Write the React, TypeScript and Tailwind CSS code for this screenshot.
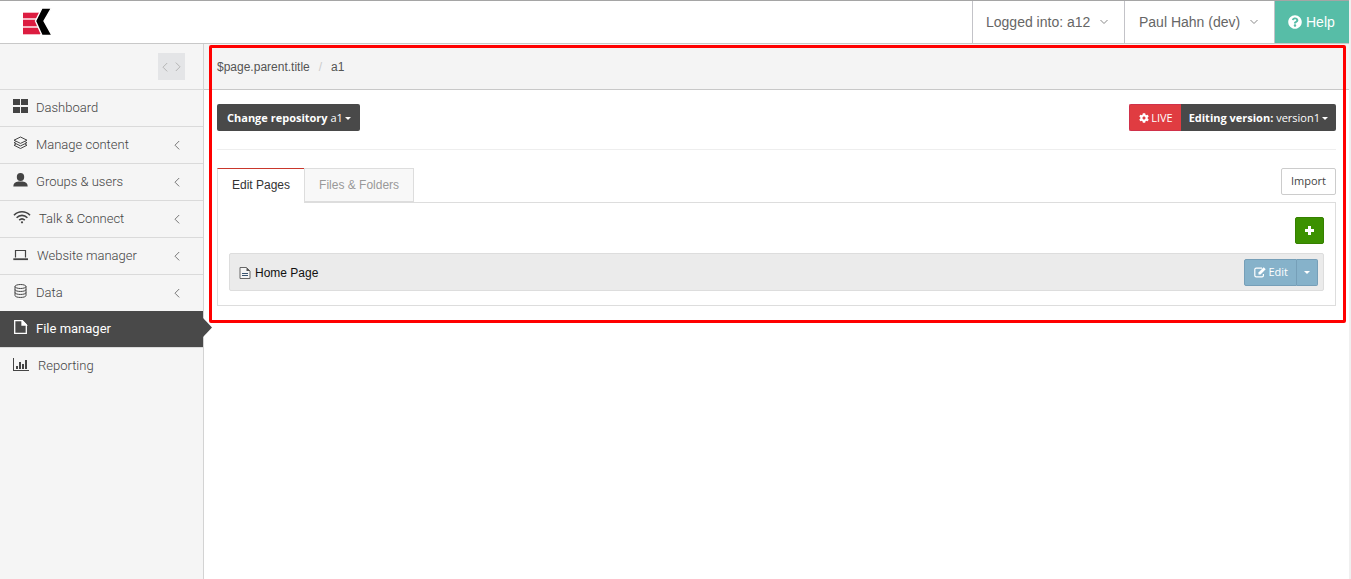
import type { ReactNode } from "react";
import { FaCog, FaQuestionCircle } from "react-icons/fa";

interface NavItem {
  label: string;
  icon: ReactNode;
  expandable?: boolean;
  active?: boolean;
  divider?: boolean;
}

const navItems: NavItem[] = [
  {
    label: "Dashboard",
    divider: true,
    icon: (
      <svg width="15" height="14" viewBox="0 0 15 14" fill="currentColor">
        <path d="M0 0h7v6H0zM8 0h7v6H8zM0 8h7v6H0zM8 8h7v6H8z" />
      </svg>
    ),
  },
  {
    label: "Manage content",
    expandable: true,
    divider: true,
    icon: (
      <svg width="15" height="14" viewBox="0 0 15 14" fill="none" stroke="currentColor" strokeLinejoin="round">
        <path d="M7.5 1 14 4.2 7.5 7.400 1 4.200z" />
        <path d="M2.800 5.800 1 6.700l6.500 3.200L14 6.700l-1.800-.9M2.800 8.300 1 9.200l6.500 3.300L14 9.200l-1.800-.9" />
      </svg>
    ),
  },
  {
    label: "Groups & users",
    expandable: true,
    divider: true,
    icon: (
      <svg width="15" height="14" viewBox="0 0 15 14" fill="currentColor">
        <ellipse cx="7.500" cy="4" rx="3.700" ry="4" />
        <path d="M.3 13.500c0-3.200 1.700-4.500 5.200-5h4c3.500.5 5.200 1.800 5.200 5z" />
      </svg>
    ),
  },
  {
    label: "Talk & Connect",
    expandable: true,
    divider: true,
    icon: (
      <svg width="18" height="14" viewBox="0 0 18 14" fill="none" stroke="currentColor" strokeWidth="1.600">
        <path d="M1 5.200C5.500.600 12.500.600 17 5.200" />
        <path d="M3.600 7.800c3.200-3.200 7.600-3.200 10.800 0" />
        <path d="M6.200 10.200c1.700-1.600 3.900-1.600 5.600 0" />
        <circle cx="9" cy="12.300" r="1.100" fill="currentColor" stroke="none" />
      </svg>
    ),
  },
  {
    label: "Website manager",
    expandable: true,
    divider: true,
    icon: (
      <svg width="16" height="14" viewBox="0 0 16 14" fill="none" stroke="currentColor">
        <path d="M2.500 10.500v-7h10v7" strokeWidth="1.200" />
        <path d="M.3 12.200h14.700" strokeWidth="1.800" />
      </svg>
    ),
  },
  {
    label: "Data",
    expandable: true,
    icon: (
      <svg width="15" height="14" viewBox="0 0 15 14" fill="none" stroke="currentColor">
        <ellipse cx="7.500" cy="2.500" rx="5.500" ry="2" />
        <path d="M2 2.500v9c0 2.600 11 2.600 11 0v-9M2 5.500c0 2.600 11 2.600 11 0M2 8.500c0 2.600 11 2.600 11 0" />
      </svg>
    ),
  },
  {
    label: "File manager",
    active: true,
    divider: true,
    icon: (
      <svg width="15" height="14" viewBox="0 0 15 14" fill="none" stroke="currentColor" strokeWidth="1.300">
        <path d="M1.700.700h7.600l4 4v8.600H1.700z" />
        <path d="M9 .700v4.300h4.300z" fill="currentColor" />
      </svg>
    ),
  },
  {
    label: "Reporting",
    icon: (
      <svg width="17" height="14" viewBox="0 0 17 14" fill="currentColor">
        <path d="M0 1h1v12h15v1H0zM3 9h2v3H3zM6 5h2v7H6zM9 7h2v5H9zM12 3h2v9h-2z" />
      </svg>
    ),
  },
];

function Logo() {
  return (
    <svg width="30" height="28" viewBox="0 0 30 28" aria-label="EK">
      <path d="M0 4h17v23H0z" fill="#f6b9c4" />
      <path d="M0 5h17v5H0zM0 12h17v6H0zM0 20h19v6H0z" fill="#dc1c40" />
      <path d="M19 0h9.500L21 13l8 14.500H19L12.500 13z" fill="#000" stroke="#fff" strokeWidth="1.400" />
    </svg>
  );
}

function Chevron({ className }: { className: string }) {
  return (
    <svg className={className} width="8" height="12" viewBox="0 0 8 12" fill="none" stroke="currentColor">
      <path d="M6.200 2 2 6.200l4.200 4.200" />
    </svg>
  );
}

function DownChevron() {
  return (
    <svg width="8" height="6" viewBox="0 0 8 6" fill="none" stroke="#888">
      <path d="M.5 1 4 4.500 7.500 1" />
    </svg>
  );
}

function Caret() {
  return (
    <svg width="6" height="3" viewBox="0 0 6 3" fill="currentColor">
      <path d="M0 0h6L3 3z" />
    </svg>
  );
}

function EditIcon() {
  return (
    <svg width="12" height="11" viewBox="0 0 12 11" fill="none" stroke="currentColor">
      <path d="M8 1.200H2.200Q.8 1.200.8 2.600v5.800q0 1.400 1.400 1.400H8q1.400 0 1.400-1.400V7" strokeWidth="1.200" />
      <path d="M4.500 7.500V5.500L9.700.300l2 2-5.200 5.200z" fill="currentColor" stroke="none" />
    </svg>
  );
}

function Header() {
  return (
    <header className="flex h-11 items-stretch justify-between border-t border-b border-t-[#a5a5a5] border-b-[#c8c8c8] bg-white font-['Liberation_Sans',sans-serif] text-sm text-[#666]">
      <a href="#" className="flex items-center pl-[23px]">
        <Logo />
      </a>
      <div className="flex">
        <button type="button" className="flex w-[152px] items-center gap-[10px] border-l border-[#c3c3c8] pl-[13px]">
          Logged into: a12
          <DownChevron />
        </button>
        <button type="button" className="flex w-[150px] items-center gap-[10px] border-l border-[#c3c3c8] pl-[14px]">
          Paul Hahn (dev)
          <DownChevron />
        </button>
        <a href="#" className="flex w-[75px] items-center gap-1 border-l border-[#c3c3c8] bg-[#57bda7] pl-[13px] text-white">
          <FaQuestionCircle className="mb-px size-[14px]" />
          Help
        </a>
      </div>
    </header>
  );
}

function Sidebar() {
  return (
    <aside className="w-[204px] shrink-0 border-r border-[#d3d3d3] bg-[#f5f5f5] font-[Roboto,sans-serif]">
      <div className="flex h-[46px] items-center justify-end border-b border-[#dadada] pr-[18px]">
        <button type="button" aria-label="Toggle sidebar" className="flex size-[27px] items-center justify-center gap-[5px] bg-[#e4e5e7] text-[#b5b5b5]">
          <Chevron className="" />
          <Chevron className="rotate-180" />
        </button>
      </div>
      <nav>
        {navItems.map((item) => (
          <a
            key={item.label}
            href="#"
            className={`relative flex items-center gap-2 pl-[13px] text-[13px] ${
              item.divider ? "h-[37px] border-b border-[#dadada]" : "h-9"
            } ${item.active ? "bg-[#494949] bg-clip-padding text-white" : "font-light text-[#444]"}`}
          >
            <span className="pb-1">{item.icon}</span>
            <span>{item.label}</span>
            {item.expandable && <Chevron className="mr-[22px] ml-auto text-[#777]" />}
            {item.active && (
              <svg className="absolute top-[7px] left-full" width="9" height="19" viewBox="0 0 9 19">
                <path d="M0 0l9 9.500L0 19z" fill="#494949" />
              </svg>
            )}
          </a>
        ))}
      </nav>
    </aside>
  );
}

function Toolbar() {
  return (
    <div className="flex items-center justify-between border-b border-[#eee] pb-[18px] font-['Open_Sans',sans-serif] text-[11px] text-white">
      <button type="button" className="flex h-[27px] items-center gap-[2px] rounded-xs bg-[#494949] pt-px pr-[9px] pl-[10px]">
        <span>
          <b>Change repository</b> a1
        </span>
        <Caret />
      </button>
      <div className="flex">
        <button type="button" className="flex h-[27px] items-center gap-[2px] rounded-l-xs border border-r-0 border-[#d0314a] bg-[#e03c41] pt-px pr-2 pl-[9px]">
          <FaCog className="mb-px size-[10px]" />
          LIVE
        </button>
        <button type="button" className="flex h-[27px] items-center gap-[2px] rounded-r-xs bg-[#494949] px-2 pt-px">
          <span>
            <b>Editing version:</b> version1
          </span>
          <Caret />
        </button>
      </div>
    </div>
  );
}

function PagesPanel() {
  return (
    <section className="mt-[18px] font-['Liberation_Sans',sans-serif] text-xs">
      <div className="flex items-start justify-between">
        <div role="tablist" className="flex">
          <button type="button" role="tab" aria-selected="true" className="relative z-10 -mb-px h-[35px] border-t border-l border-t-[#c9372c] border-l-[#ddd] bg-white px-[14px] pb-[2px] text-[#333]">
            Edit Pages
          </button>
          <button type="button" role="tab" aria-selected="false" className="h-[34px] border border-[#ddd] bg-[#f8f8f8] px-[14px] text-[#999]">
            Files &amp; Folders
          </button>
        </div>
        <button type="button" className="h-[27px] rounded-xs border border-[#ccc] bg-white px-[9px] font-['Open_Sans',sans-serif] text-[11px] text-[#444]">
          Import
        </button>
      </div>
      <div className="border border-[#ddd] px-[11px] py-[14px]">
        <div className="mb-[9px] flex justify-end">
          <button type="button" aria-label="Add page" className="flex h-[27px] w-[29px] items-center justify-center rounded-xs border border-[#358000] bg-[#3c9100] text-white">
            <svg width="9" height="9" viewBox="0 0 9 9" fill="currentColor">
              <path d="M3 0h3v3h3v3H6v3H3V6H0V3h3z" />
            </svg>
          </button>
        </div>
        <div className="flex h-[38px] items-center justify-between rounded-xs border border-[#ddd] bg-[#ebebeb] pr-[5px] pl-[9px]">
          <a href="#" className="flex items-center gap-1 pt-[2px] text-[#111]">
            <svg width="12" height="12" viewBox="0 0 12 12" fill="none">
              <path d="M1 .5h6.500l3.500 3.500v7.500H1z" fill="#f4f4f4" stroke="#666" />
              <path d="M7.500.5V4H11z" fill="#555" />
              <path d="M3 6.500h6M3 8.500h6" stroke="#39536e" />
            </svg>
            <span>Home Page</span>
          </a>
          <div className="flex font-['Open_Sans',sans-serif] text-[11px] text-white">
            <button type="button" className="flex h-[27px] items-center gap-[2px] rounded-l-xs border border-[#769fb8] bg-[#86b2ca] pt-px pr-[8px] pl-[9px]">
              <EditIcon />
              Edit
            </button>
            <button type="button" aria-label="More actions" className="flex h-[27px] w-[21px] items-center justify-center rounded-r-xs border border-l-0 border-[#769fb8] bg-[#86b2ca] pt-px">
              <Caret />
            </button>
          </div>
        </div>
      </div>
    </section>
  );
}

export default function App() {
  return (
    <div className="flex min-h-screen flex-col border-r-2 border-[#f0f0f0] bg-white">
      <Header />
      <div className="flex flex-1">
        <Sidebar />
        <main className="min-w-0 flex-1">
          <div className="relative">
            <nav aria-label="Breadcrumb" className="flex h-[46px] items-center border-b border-[#c8c8c8] bg-[#f4f4f4] pl-[13px] font-['Liberation_Sans',sans-serif] text-xs text-[#555]">
              <a href="#">$page.parent.title</a>
              <span className="px-[9px] text-[#ccc]">/</span>
              <span>a1</span>
            </nav>
            <div className="px-[13px] pt-[14px]">
              <Toolbar />
              <PagesPanel />
            </div>
            <div className="pointer-events-none absolute top-px right-[3px] -bottom-[17px] left-[5px] rounded-xs border-3 border-[#f00]" />
          </div>
        </main>
      </div>
    </div>
  );
}
